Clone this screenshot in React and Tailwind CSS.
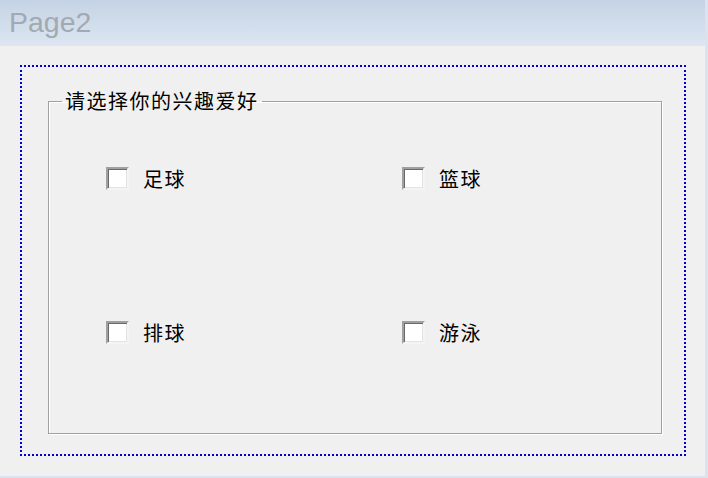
import React from "react";

function Check({ label }) {
  return (
    <div className="flex items-center gap-[14px] h-[23px]">
      <div className="w-[23px] h-[23px] bg-white border-2 border-t-[#a0a0a0] border-l-[#a0a0a0] border-r-[#f4f4f4] border-b-[#f4f4f4] shadow-[inset_1px_1px_0_#696969,inset_-1px_-1px_0_#e3e3e3]" />
      <span className="text-[20px] leading-[23px] tracking-[1.5px] text-black">{label}</span>
    </div>
  );
}

export default function App() {
  return (
    <div
      className="w-[708px] h-[478px] bg-[#f0f0f0] flex flex-col border-r-[3px] border-b-[2px] border-[#dbe4ee]"
      style={{ fontFamily: '"Noto Sans CJK SC", "Liberation Sans", sans-serif' }}
    >
      <div className="h-[46px] shrink-0 bg-gradient-to-b from-[#c4d3e5] to-[#dde6f1] pl-[9px] flex items-center">
        <span
          className="text-[28.5px] leading-none text-[#a3a9b0] -mt-[2px]"
          style={{ fontFamily: '"Liberation Sans", Arial, sans-serif' }}
        >
          Page2
        </span>
      </div>
      <div className="flex-1 pt-[19px] pl-[20px]">
        <div className="w-[666px] h-[391px] border-2 border-dotted border-[#0000cc] pt-[24px] pl-[26px]">
          <fieldset className="w-[614px] h-[343px] border border-[#a0a0a0] shadow-[1px_1px_0_#ffffff,inset_1px_1px_0_#ffffff] m-0 p-0">
            <legend className="ml-[13px] px-[3px] text-[20px] leading-[20px] tracking-[1.5px] text-black">
              请选择你的兴趣爱好
            </legend>
            <div className="pt-[56px] pl-[57px] grid grid-cols-[296px_1fr] gap-y-[131px]">
              <Check label="足球" />
              <Check label="篮球" />
              <Check label="排球" />
              <Check label="游泳" />
            </div>
          </fieldset>
        </div>
      </div>
    </div>
  );
}
